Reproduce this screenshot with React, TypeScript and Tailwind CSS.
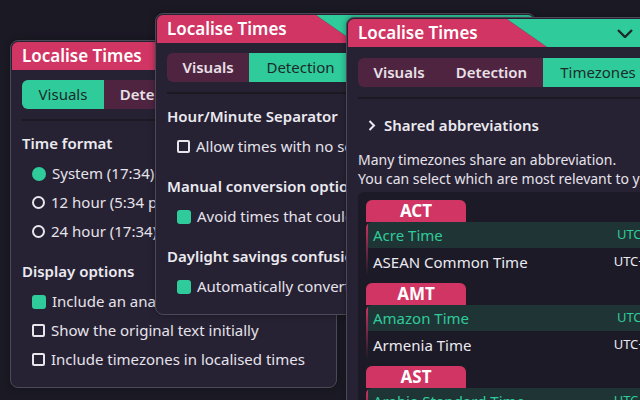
import React from 'react';

const tabs = [
  { label: 'Visuals', w: 'w-[82px]' },
  { label: 'Detection', w: 'w-[103px]' },
  { label: 'Timezones', w: 'w-[110px]' },
];

const Header: React.FC = () => (
  <div className="mx-px mt-px flex h-[28px] shrink-0 overflow-hidden rounded-t-md">
    <div className="flex w-[159px] shrink-0 items-center bg-[#d13563] pl-[10px] text-[17px] font-semibold whitespace-nowrap text-white">
      Localise Times
    </div>
    <svg width="40" height="28" viewBox="0 0 40 28" className="shrink-0">
      <polygon points="0,0 40,28 0,28" fill="#d13563" />
      <polygon points="0,0 40,0 40,28" fill="#2fcb9b" />
    </svg>
    <div className="flex flex-1 items-center bg-[#2fcb9b]">
      <svg width="16" height="9" viewBox="0 0 16 9" className="ml-[70px]">
        <polyline points="1,1 8,8 15,1" fill="none" stroke="#1c2a29" strokeWidth="2.4" />
      </svg>
    </div>
  </div>
);

const Tabs: React.FC<{ active: number; top: string }> = ({ active, top }) => (
  <div className={`${top} flex h-[29px] shrink-0 overflow-hidden rounded-md bg-[#4f2440]`}>
    {tabs.map((t, i) => (
      <div
        key={t.label}
        className={`${t.w} flex shrink-0 items-center justify-center text-[15px] ${
          i === active ? 'bg-[#2fcb9b] font-normal text-[#1b2b29]' : 'font-semibold text-[#e9e0e8]'
        }`}
      >
        {t.label}
      </div>
    ))}
  </div>
);

const Separator: React.FC = () => <div className="mt-[10px] h-[2px] shrink-0 bg-[#1b1a23]" />;

const Heading: React.FC<{ first?: boolean; children: React.ReactNode }> = ({ first, children }) => (
  <div
    className={`${first ? 'mt-[12px]' : 'mt-[15px]'} h-[20px] text-[15px] leading-[20px] font-semibold whitespace-nowrap text-[#eceaf1]`}
  >
    {children}
  </div>
);

const Radio: React.FC<{ on?: boolean }> = ({ on }) =>
  on ? (
    <span className="h-[14px] w-[14px] shrink-0 rounded-full bg-[#2fcb9b]" />
  ) : (
    <span className="h-[13px] w-[13px] shrink-0 rounded-full border-2 border-[#e8e6ec]" />
  );

const Check: React.FC<{ on?: boolean }> = ({ on }) =>
  on ? (
    <span className="h-[14px] w-[14px] shrink-0 rounded-[3px] bg-[#2fcb9b]" />
  ) : (
    <span className="h-[13px] w-[13px] shrink-0 rounded-[2px] border-2 border-[#e8e6ec]" />
  );

const Item: React.FC<{ first?: boolean; icon: React.ReactNode; children: React.ReactNode }> = ({
  first,
  icon,
  children,
}) => (
  <div
    className={`${first ? 'mt-[6px]' : ''} flex h-[29px] shrink-0 items-center gap-[6px] pl-[10px] text-[15px] whitespace-nowrap text-[#e6e3ec]`}
  >
    {icon}
    <span>{children}</span>
  </div>
);

const zones = [
  {
    abbr: 'ACT',
    rows: [
      ['Acre Time', 'UTC-05:00'],
      ['ASEAN Common Time', 'UTC+08:00'],
    ],
  },
  {
    abbr: 'AMT',
    rows: [
      ['Amazon Time', 'UTC-04:00'],
      ['Armenia Time', 'UTC+04:00'],
    ],
  },
  {
    abbr: 'AST',
    rows: [
      ['Arabia Standard Time', 'UTC+03:00'],
      ['Atlantic Standard Time', 'UTC-04:00'],
    ],
  },
];

const Window: React.FC<{ pos: string; children: React.ReactNode }> = ({ pos, children }) => (
  <div
    className={`absolute ${pos} flex flex-col overflow-hidden rounded-lg border border-[#4b4957] bg-[#262233] shadow-[0_0_6px_rgba(0,0,0,0.35)]`}
  >
    <Header />
    <div className="flex flex-col px-[11px]">{children}</div>
  </div>
);

export default function App() {
  return (
    <div className="relative h-[400px] w-[640px] overflow-hidden bg-[#1b1a24] font-['Noto_Sans',sans-serif]">
      <Window pos="left-[10px] top-[40px] w-[327px] h-[348px]">
        <Tabs active={0} top="mt-[10px]" />
        <Separator />
        <Heading first>Time format</Heading>
        <Item first icon={<Radio on />}>System (17:34)</Item>
        <Item icon={<Radio />}>12 hour (5:34 pm)</Item>
        <Item icon={<Radio />}>24 hour (17:34)</Item>
        <Heading>Display options</Heading>
        <Item first icon={<Check on />}>Include an analogue clock</Item>
        <Item icon={<Check />}>Show the original text initially</Item>
        <Item icon={<Check />}>Include timezones in localised times</Item>
      </Window>

      <Window pos="left-[155px] top-[13px] w-[381px] h-[302px]">
        <Tabs active={1} top="mt-[10px]" />
        <Separator />
        <Heading first>Hour/Minute Separator</Heading>
        <Item first icon={<Check />}>Allow times with no separator</Item>
        <Heading>Manual conversion options</Heading>
        <Item first icon={<Check on />}>Avoid times that could be wrong</Item>
        <Heading>Daylight savings confusion</Heading>
        <Item first icon={<Check on />}>Automatically convert</Item>
      </Window>

      <Window pos="left-[346px] top-[17px] w-[364px] h-[420px]">
        <Tabs active={2} top="mt-[11px]" />
        <Separator />
        <div className="mt-[16px] flex h-[20px] items-center gap-[8px] pl-[10px] text-[15px] font-semibold text-[#eceaf1]">
          <svg width="8" height="11" viewBox="0 0 8 11">
            <polyline points="1.5,1 6,5.5 1.5,10" fill="none" stroke="#eceaf1" strokeWidth="2" />
          </svg>
          <span>Shared abbreviations</span>
        </div>
        <p className="mt-[15px] text-[14px] leading-[19px] whitespace-nowrap text-[#e6e3ec]">
          Many timezones share an abbreviation.
          <br />
          You can select which are most relevant to you.
        </p>
        <div className="mt-[4px] flex flex-col rounded-md bg-[#1b1a26] pt-[8px] pl-[8px]">
          {zones.map((z) => (
            <div key={z.abbr} className="mb-[7px] flex flex-col">
              <div className="flex h-[22px] w-[100px] items-center justify-center rounded-t-md bg-[#d13563] text-[17px] font-bold text-white">
                {z.abbr}
              </div>
              <div className="flex overflow-hidden rounded-tl-md">
                <div className="w-[2px] shrink-0 bg-linear-to-b from-[#d13563] to-transparent" />
                <div className="flex flex-1 flex-col">
                  {z.rows.map(([name, utc], i) => (
                    <div
                      key={name}
                      className={`flex items-center pl-[5px] whitespace-nowrap ${
                        i === 0 ? 'h-[26px] bg-[#1f3535] text-[#2fcb9b]' : 'h-[28px] text-[#eceaf1]'
                      }`}
                    >
                      <span className="w-[236px] shrink-0 text-[15px]">{name}</span>
                      <span className="w-[70px] shrink-0 text-right text-[13px]">{utc}</span>
                    </div>
                  ))}
                </div>
              </div>
            </div>
          ))}
        </div>
      </Window>
    </div>
  );
}
